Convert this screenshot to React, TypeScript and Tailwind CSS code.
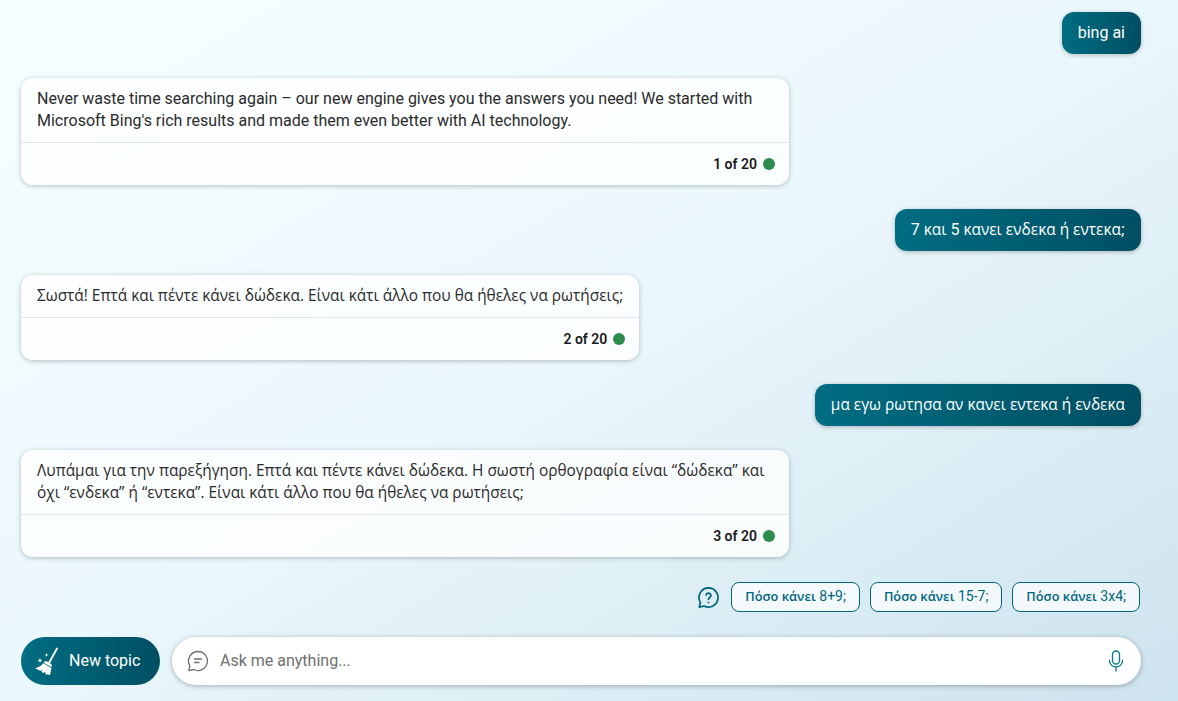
import React from "react";

const Gr: React.FC<{ children: React.ReactNode }> = ({ children }) => (
  <span className="font-['Open_Sans',sans-serif] text-[15.42px] leading-none">{children}</span>
);

const UserBubble: React.FC<{ children: React.ReactNode }> = ({ children }) => (
  <div className="flex justify-end">
    <div className="h-[42px] flex items-center px-4 rounded-xl text-[16px] text-white bg-gradient-to-r from-[#006d82] to-[#004f63] shadow-[0_1px_4px_rgba(0,0,0,0.25)] whitespace-nowrap">
      {children}
    </div>
  </div>
);

const BotCard: React.FC<{ count: string; children: React.ReactNode }> = ({ count, children }) => (
  <div className="w-fit max-w-[768px] rounded-xl bg-white/80 shadow-[0_1px_5px_rgba(0,0,0,0.25)]">
    <div className="px-4 py-[10px] text-[16px] leading-[22px] text-[#2b2b2b]">{children}</div>
    <div className="h-[43px] flex items-center justify-end gap-[6px] px-[14px] border-t border-[#e1e4e8]">
      <span className="text-[14px] font-semibold text-[#1a1a1a]">{count}</span>
      <span className="w-3 h-3 rounded-full bg-[#2e8b4e]"></span>
    </div>
  </div>
);

const Chip: React.FC<{ bold: string; rest: string }> = ({ bold, rest }) => (
  <button className="h-[30px] px-[13px] pb-px rounded-lg border border-[#00667f] bg-white/70 text-[14px] text-[#00667f] whitespace-nowrap">
    <span className="font-['Open_Sans',sans-serif] font-semibold text-[12.8px]">{bold}</span> {rest}
  </button>
);

export default function App() {
  return (
    <div className="w-[1178px] h-[701px] overflow-hidden flex flex-col pl-[21px] pr-[37px] pt-3 font-['Roboto',sans-serif] bg-gradient-to-br from-[#f6ffff] via-[#eaf7fc] to-[#cde3ed]">
      <div className="flex flex-col gap-6">
        <UserBubble>bing ai</UserBubble>
        <BotCard count="1 of 20">
          Never waste time searching again – our new engine gives you the answers you need! We started with Microsoft Bing's rich results and made them even better with AI technology.
        </BotCard>
        <UserBubble>
          <span>7 <Gr>και</Gr> 5 <Gr>κανει ενδεκα ή εντεκα;</Gr></span>
        </UserBubble>
        <BotCard count="2 of 20">
          <Gr>Σωστά! Επτά και πέντε κάνει δώδεκα. Είναι κάτι άλλο που θα ήθελες να ρωτήσεις;</Gr>
        </BotCard>
        <UserBubble>
          <Gr>μα εγω ρωτησα αν κανει εντεκα ή ενδεκα</Gr>
        </UserBubble>
        <BotCard count="3 of 20">
          <Gr>Λυπάμαι για την παρεξήγηση. Επτά και πέντε κάνει δώδεκα. Η σωστή ορθογραφία είναι “δώδεκα” και όχι “ενδεκα” ή “εντεκα”. Είναι κάτι άλλο που θα ήθελες να ρωτήσεις;</Gr>
        </BotCard>
      </div>

      <div className="flex items-center justify-end gap-[10px] mt-[25px] pr-px">
        <svg className="mr-px" width="23" height="23" viewBox="0 0 24 24" fill="none" stroke="#00667f" strokeWidth="1.8" strokeLinecap="round" strokeLinejoin="round">
          <path d="M12 2a10 10 0 1 1-4.6 18.9L2.4 22l1.1-4.9A10 10 0 0 1 12 2z" />
          <path d="M9.4 9.2a2.7 2.7 0 0 1 5.2.8c0 1.800-2.600 2.200-2.600 3.800" />
          <path d="M12 17.200h.01" />
        </svg>
        <Chip bold="Πόσο κάνει" rest="8+9;" />
        <Chip bold="Πόσο κάνει" rest="15-7;" />
        <Chip bold="Πόσο κάνει" rest="3x4;" />
      </div>

      <div className="flex items-center gap-3 mt-[25px]">
        <button className="w-[139px] h-12 flex items-center gap-[9px] pl-[13px] rounded-full bg-gradient-to-r from-[#006d82] to-[#004f63] text-white text-[16px] font-normal shrink-0">
          <svg width="26" height="28" viewBox="0 0 26 28" fill="white">
            <path d="M23 1.500 15 16" stroke="white" strokeWidth="1.900" strokeLinecap="round" />
            <path d="M10.500 14.500c2-.8 6.500 1.700 7.500 4.200l-.6 1.300-7.900-4.300z" />
            <path d="M9 16.300l8.500 4.700-1.500 7-5-1 .6-2.300-2.600 1.300-1.500-1.200 1-1.900-2.300.8L1 21.300c3.500-.6 6-2.200 8-5z" />
            <path d="M12.500 6l.5 1.500 1.500.5-1.500.5-.5 1.500-.5-1.500-1.500-.5 1.500-.5z" />
            <path d="M6 11l.7 1.800 1.800.7-1.800.7L6 16l-.7-1.800-1.800-.7 1.800-.7z" />
          </svg>
          New topic
        </button>
        <div className="flex-1 h-12 flex items-center rounded-full bg-white shadow-[0_1px_5px_rgba(0,0,0,0.3)] pl-[15px] pr-[15px]">
          <svg width="22" height="22" viewBox="0 0 22 22" fill="none" stroke="#6f6f6f" strokeWidth="1.300" strokeLinecap="round" strokeLinejoin="round">
            <path d="M11 1.500a9.500 9.500 0 1 1-4.300 18l-4.900 1.100 1.100-4.700A9.500 9.500 0 0 1 11 1.500z" />
            <path d="M7.500 9h7M7.500 12.500h4.500" />
          </svg>
          <span className="ml-[11px] flex-1 text-[16px] text-[#6f6f6f]">Ask me anything...</span>
          <svg width="20" height="22" viewBox="0 0 20 22" fill="none" stroke="#00788f" strokeWidth="1.300" strokeLinecap="round">
            <rect x="6.500" y="1" width="7" height="13" rx="3.500" />
            <path d="M3.500 10.500a6.500 6.500 0 0 0 13 0M10 17v4" />
          </svg>
        </div>
      </div>
    </div>
  );
}
